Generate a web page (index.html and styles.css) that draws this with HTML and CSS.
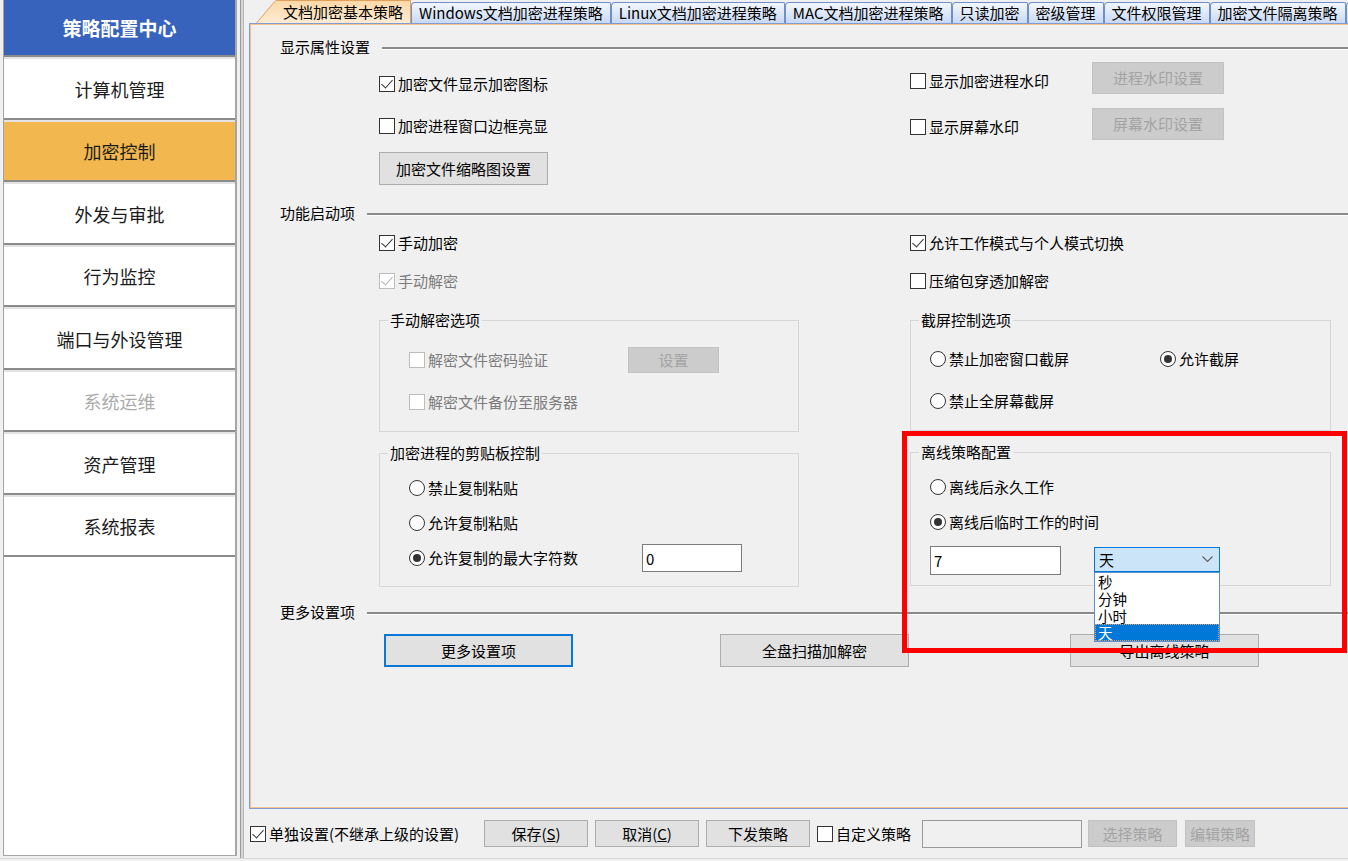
FILE: index.html
```html
<!DOCTYPE html>
<html lang="zh-CN">
<head>
  <meta charset="UTF-8">
  <meta name="viewport" content="width=device-width, initial-scale=1.0">
  <link rel="stylesheet" href="styles.css">
  <title>策略配置中心</title>
</head>
<body>
  <div class="app">
    <aside class="nav">
      <div class="nav-head">策略配置中心</div>
      <div class="nav-item">计算机管理</div>
      <div class="nav-item on">加密控制</div>
      <div class="nav-item">外发与审批</div>
      <div class="nav-item">行为监控</div>
      <div class="nav-item">端口与外设管理</div>
      <div class="nav-item off">系统运维</div>
      <div class="nav-item">资产管理</div>
      <div class="nav-item">系统报表</div>
    </aside>

    <div class="split"><div class="split-bar"></div></div>

    <div class="main">
      <div class="tabs">
        <div class="tab tab-on">
          <svg viewBox="0 0 156 24" preserveAspectRatio="none">
            <defs>
              <linearGradient id="tabfill" x1="0" y1="0" x2="0" y2="1">
                <stop offset="0" stop-color="#fcd8a6"/>
                <stop offset="1" stop-color="#fdebd4"/>
              </linearGradient>
            </defs>
            <path d="M0.5 24 L18.5 2 Q19.5 0.5 21.5 0.5 L155.5 0.5 L155.5 24" fill="url(#tabfill)" stroke="#e09a55"/>
          </svg>
          文档加密基本策略
        </div>
        <div class="tab">Windows文档加密进程策略</div>
        <div class="tab">Linux文档加密进程策略</div>
        <div class="tab">MAC文档加密进程策略</div>
        <div class="tab">只读加密</div>
        <div class="tab">密级管理</div>
        <div class="tab">文件权限管理</div>
        <div class="tab">加密文件隔离策略</div>
        <div class="tab tab-more"></div>
      </div>

      <div class="panel">
        <!-- 显示属性设置 -->
        <div class="sec"><span>显示属性设置</span><i class="rule"></i></div>
        <div class="cols">
          <div class="col">
            <label class="chk mt13"><span class="box on"></span>加密文件显示加密图标</label>
            <label class="chk mt14"><span class="box"></span>加密进程窗口边框亮显</label>
            <button class="btn btn-thumb mt12">加密文件缩略图设置</button>
          </div>
          <div class="col">
            <div class="wm mt5">
              <label class="chk"><span class="box"></span>显示加密进程水印</label>
              <button class="btn off btn-wm">进程水印设置</button>
            </div>
            <div class="wm mt13">
              <label class="chk"><span class="box"></span>显示屏幕水印</label>
              <button class="btn off btn-wm">屏幕水印设置</button>
            </div>
          </div>
        </div>

        <!-- 功能启动项 -->
        <div class="sec mt18"><span>功能启动项</span><i class="rule"></i></div>
        <div class="cols">
          <div class="col">
            <label class="chk mt6"><span class="box on"></span>手动加密</label>
            <label class="chk off mt10"><span class="box on"></span>手动解密</label>

            <fieldset class="grp mt15">
              <legend>手动解密选项</legend>
              <div class="row mt16">
                <label class="chk off w219"><span class="box"></span>解密文件密码验证</label>
                <button class="btn off btn-set">设置</button>
              </div>
              <div class="row mt14">
                <label class="chk off"><span class="box"></span>解密文件备份至服务器</label>
              </div>
            </fieldset>

            <fieldset class="grp grp-clip mt11">
              <legend>加密进程的剪贴板控制</legend>
              <div class="row mt11">
                <label class="rad"><span class="dot"></span>禁止复制粘贴</label>
              </div>
              <div class="row mt7">
                <label class="rad"><span class="dot"></span>允许复制粘贴</label>
              </div>
              <div class="row mt7">
                <label class="rad w233"><span class="dot on"></span>允许复制的最大字符数</label>
                <input class="inp inp-max" type="text" value="0">
              </div>
            </fieldset>
          </div>

          <div class="col">
            <label class="chk mt6"><span class="box on"></span>允许工作模式与个人模式切换</label>
            <label class="chk mt10"><span class="box"></span>压缩包穿透加解密</label>

            <fieldset class="grp grp-r mt15">
              <legend>截屏控制选项</legend>
              <div class="row mt15">
                <label class="rad w230"><span class="dot"></span>禁止加密窗口截屏</label>
                <label class="rad"><span class="dot on"></span>允许截屏</label>
              </div>
              <div class="row mt14">
                <label class="rad"><span class="dot"></span>禁止全屏幕截屏</label>
              </div>
            </fieldset>

            <fieldset class="grp grp-r grp-off mt11">
              <legend>离线策略配置</legend>
              <div class="row mt11">
                <label class="rad"><span class="dot"></span>离线后永久工作</label>
              </div>
              <div class="row mt7">
                <label class="rad"><span class="dot on"></span>离线后临时工作的时间</label>
              </div>
              <div class="row row-top mt10">
                <input class="inp inp-days" type="text" value="7">
                <div class="sel-wrap">
                  <div class="sel">
                    <span>天</span>
                    <svg width="11" height="7" viewBox="0 0 11 7"><polyline points="0.5,0.5 5.5,5.5 10.5,0.5" fill="none" stroke="#5c5c5c" stroke-width="1.1"/></svg>
                  </div>
                  <ul class="sel-list">
                    <li>秒</li>
                    <li>分钟</li>
                    <li>小时</li>
                    <li class="picked">天</li>
                  </ul>
                </div>
              </div>
            </fieldset>
          </div>
        </div>

        <!-- 更多设置项 -->
        <div class="sec mt15"><span>更多设置项</span><i class="rule"></i></div>
        <div class="more">
          <button class="btn btn-more focus">更多设置项</button>
          <button class="btn btn-more">全盘扫描加解密</button>
          <button class="btn btn-more">导出离线策略</button>
        </div>
      </div>

      <div class="foot">
        <label class="chk w234"><span class="box on"></span>单独设置(不继承上级的设置)</label>
        <button class="btn btn-foot">保存(<u>S</u>)</button>
        <button class="btn btn-foot">取消(<u>C</u>)</button>
        <button class="btn btn-foot">下发策略</button>
        <label class="chk w105"><span class="box"></span>自定义策略</label>
        <input class="inp inp-policy" type="text" value="" disabled>
        <button class="btn off btn-pick">选择策略</button>
        <button class="btn off btn-edit">编辑策略</button>
      </div>
    </div>
  </div>

  <div class="mark"></div>
</body>
</html>
```

FILE: styles.css
```css
* {
  box-sizing: border-box;
}

body {
  margin: 0;
  height: 861px;
  overflow: hidden;
  background: #f0f0f0;
  color: #000;
  font-family: "Noto Sans CJK SC", "Microsoft YaHei", sans-serif;
  font-size: 15px;
  line-height: 20px;
}

.app {
  display: flex;
  height: 859px;
  border-bottom: 1px solid #d8d8d8;
}

/* left menu */
.nav {
  margin-left: 3px;
  width: 234px;
  height: 856px;
  background: #fff;
  border-left: 1px solid #a3a3a3;
  border-right: 2px solid #a6a6a6;
  border-bottom: 1px solid #a6a6a6;
}

.nav-head {
  height: 57px;
  border-bottom: 2px solid #8b8b8b;
  background: #3763bd;
  color: #fff;
  font-size: 19px;
  font-weight: bold;
  display: flex;
  align-items: center;
  justify-content: center;
}

.nav-item {
  height: 62.5px;
  padding-top: 3px;
  border-bottom: 2px solid #8b8b8b;
  background: linear-gradient(#e3e3e3 0 2px, #fff 2px);
  color: #1b1b1b;
  font-size: 18px;
  display: flex;
  align-items: center;
  justify-content: center;
}

.nav-item.on {
  background: linear-gradient(#e3e3e3 0 2px, #f2b84f 2px);
}

.nav-item.off {
  color: #ababab;
}

.split {
  width: 12px;
  padding-left: 3px;
}

.split-bar {
  width: 4px;
  height: 100%;
  border-left: 1px solid #9c9c9c;
  border-right: 1px solid #b8b8b8;
  background: #d6d6d6;
}

/* main area */
.main {
  width: 1099px;
  display: flex;
  flex-direction: column;
  overflow: hidden;
}

.tabs {
  height: 23px;
  flex: none;
  display: flex;
  align-items: flex-end;
  padding-left: 7px;
  white-space: nowrap;
}

.tab {
  flex: none;
  height: 21px;
  padding: 0 7px;
  border: 1px solid #6f8fca;
  border-bottom: none;
  border-radius: 4px 2px 0 0;
  background: linear-gradient(#f3f7fd, #c8d9f4);
  line-height: 20px;
}

.tab-more {
  width: 40px;
}

.tab-on {
  position: relative;
  z-index: 0;
  height: 23px;
  padding: 0 8px 0 27px;
  border: none;
  background: none;
  line-height: 23px;
}

.tab-on svg {
  position: absolute;
  left: 0;
  top: 0;
  width: 100%;
  height: 100%;
  z-index: -1;
}

.panel {
  flex: none;
  width: 1110px;
  height: 786px;
  padding: 13px 0 0 30px;
  border: 1px solid #7f9dd2;
  box-shadow: inset 0 0 0 1px #f5c289;
}

.sec {
  display: flex;
  align-items: center;
  gap: 12px;
  height: 20px;
}

.sec .rule {
  flex: 1;
  height: 3px;
  margin-top: 2px;
  border-top: 2px solid #8a8a8a;
  border-bottom: 1px solid #fff;
}

.cols {
  display: grid;
  grid-template-columns: 531px 1fr;
  padding-left: 99px;
}

.col {
  display: flex;
  flex-direction: column;
  align-items: flex-start;
}

.row {
  display: flex;
  align-items: center;
}

.row-top {
  align-items: flex-start;
}

.wm {
  display: flex;
  align-items: flex-start;
}

.wm .chk {
  width: 182px;
  margin-top: 5px;
}

/* checkbox and radio */
.chk,
.rad {
  display: flex;
  align-items: center;
  gap: 3px;
  height: 28px;
  flex: none;
}

.box {
  position: relative;
  width: 16px;
  height: 16px;
  border: 1px solid #333;
  background: #fff;
}

.box.on::after {
  content: "";
  position: absolute;
  left: 4px;
  top: 0px;
  width: 5px;
  height: 10px;
  border: solid #333;
  border-width: 0 1.4px 1.4px 0;
  transform: rotate(42deg);
}

.chk.off {
  color: #7c7c7c;
}

.chk.off .box {
  border-color: #bcbcbc;
}

.chk.off .box.on::after {
  border-color: #b4b4b4;
}

.dot {
  width: 16px;
  height: 16px;
  border: 1px solid #333;
  border-radius: 50%;
  background: #fff;
  display: grid;
  place-items: center;
}

.dot.on::after {
  content: "";
  width: 8px;
  height: 8px;
  border-radius: 50%;
  background: #333;
}

/* buttons and fields */
.btn {
  font: inherit;
  color: #000;
  height: 33px;
  padding: 0;
  border: 1px solid #adadad;
  background: #e1e1e1;
}

.btn.off {
  color: #a3a3a3;
  border-color: #c2c2c2;
  background: #cccccc;
}

.btn.focus {
  border: 2px solid #0a78d6;
}

.btn-thumb {
  width: 169px;
}

.btn-wm {
  width: 132px;
  height: 32px;
}

.btn-set {
  width: 91px;
  height: 26px;
}

.btn-more {
  width: 189px;
}

.btn-foot {
  width: 104px;
  height: 27px;
  margin-right: 7px;
}

.btn-pick {
  width: 89px;
  height: 27px;
  margin: 0 8px 0 6px;
}

.btn-edit {
  width: 70px;
  height: 27px;
}

.inp {
  font: inherit;
  color: #000;
  height: 28px;
  padding: 0 3px;
  border: 1px solid #7a7a7a;
  background: #fff;
}

.inp-max {
  width: 100px;
}

.inp-days {
  width: 131px;
  height: 29px;
}

.inp-policy {
  width: 160px;
  background: #f0f0f0;
  border-color: #9a9a9a;
}

.w219 { width: 219px; }
.w230 { width: 230px; }
.w233 { width: 233px; }
.w234 { width: 234px; }
.w105 { width: 105px; }

/* group boxes */
.grp {
  margin: 0;
  padding: 0 0 15px 8px;
  min-width: 0;
  width: 420px;
  border: 1px solid #d6d6d6;
}

.grp legend {
  padding: 0 2px;
  line-height: 20px;
}

.grp .row {
  margin-left: 21px;
}

.grp-clip {
  padding-bottom: 14px;
}

.grp-r {
  width: 421px;
}

.grp-r .row {
  margin-left: 11px;
}

.grp-off {
  padding-bottom: 10px;
}

/* combo box, opened */
.sel-wrap {
  position: relative;
  margin: 1px 0 0 33px;
  width: 126px;
  height: 25px;
}

.sel {
  height: 25px;
  padding: 0 6px 0 4px;
  border: 1px solid #0078d7;
  background: #cce4f7;
  display: flex;
  align-items: center;
  justify-content: space-between;
}

.sel-list {
  position: absolute;
  z-index: 5;
  left: 0;
  top: 25px;
  width: 126px;
  margin: 0;
  padding: 0;
  list-style: none;
  background: #fff;
  border: 1px solid #5b8fd2;
}

.sel-list li {
  height: 17px;
  padding-left: 3px;
  font-size: 14.5px;
  line-height: 17px;
}

.sel-list li.picked {
  background: #0078d7;
  color: #fff;
  outline: 1px dotted #e8a060;
  outline-offset: -1px;
}

.more {
  display: grid;
  grid-template-columns: 336px 350px 189px;
  padding-left: 104px;
  margin-top: 12px;
}

.foot {
  flex: none;
  height: 49px;
  display: flex;
  align-items: center;
  padding-left: 1px;
}

/* red highlight drawn over the screenshot */
.mark {
  position: absolute;
  left: 902px;
  top: 431px;
  width: 445px;
  height: 222px;
  border: 5px solid #ff0000;
  z-index: 10;
  pointer-events: none;
}

.mt5 { margin-top: 5px; }
.mt6 { margin-top: 6px; }
.mt7 { margin-top: 7px; }
.mt10 { margin-top: 10px; }
.mt11 { margin-top: 11px; }
.mt12 { margin-top: 12px; }
.mt13 { margin-top: 13px; }
.mt14 { margin-top: 14px; }
.mt15 { margin-top: 15px; }
.mt16 { margin-top: 16px; }
.mt18 { margin-top: 18px; }
```
